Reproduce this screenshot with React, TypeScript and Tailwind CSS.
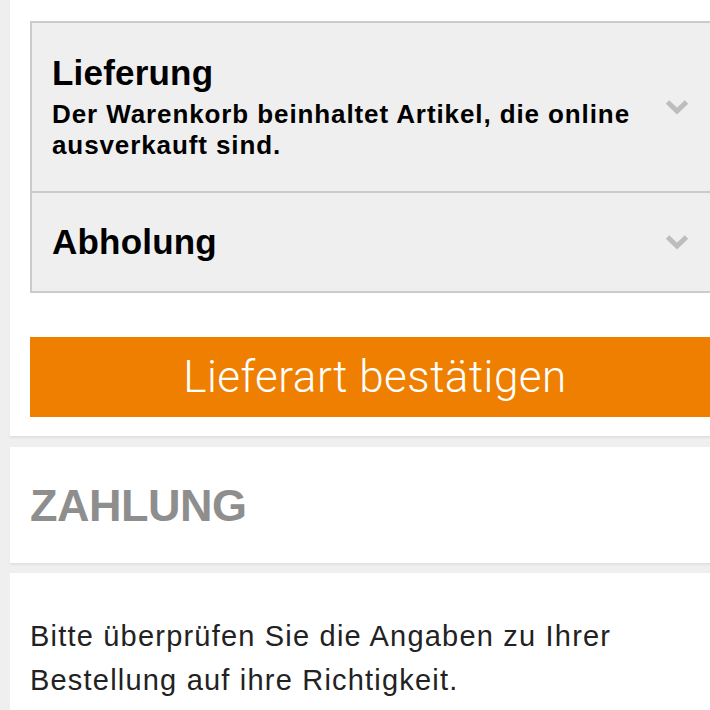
const Chevron = () => (
  <svg width="24" height="16" viewBox="0 0 24 16" className="shrink-0">
    <path
      d="M2.5 3 L12 12 L21.5 3"
      fill="none"
      stroke="#bdbdbd"
      strokeWidth="5"
      strokeLinejoin="miter"
    />
  </svg>
);

const App = () => {
  return (
    <div
      className="w-[710px] h-[710px] overflow-hidden bg-[#efefef]"
      style={{ fontFamily: '"Liberation Sans", Arial, sans-serif' }}
    >
      <div className="ml-[10px] w-[740px] bg-white px-5 pt-[21px] pb-[19px] shadow-[0_2px_2px_rgba(0,0,0,0.06)]">
        <div className="border-2 border-[#cbcbcb] bg-[#efefef]">
          <div className="flex items-center justify-between pl-5 pr-[39px] py-[30px] border-b-2 border-[#cbcbcb]">
            <div className="text-black font-bold">
              <div className="text-[35px] leading-[40px] tracking-[0.2px]">Lieferung</div>
              <div className="mt-[6px] text-[26px] leading-[31px] tracking-[0.9px] max-w-[600px]">
                Der Warenkorb beinhaltet Artikel, die online ausverkauft sind.
              </div>
            </div>
            <Chevron />
          </div>
          <div className="flex items-center justify-between pl-5 pr-[39px] py-[29px]">
            <div className="text-black font-bold text-[35px] leading-[40px] tracking-[0.2px]">
              Abholung
            </div>
            <Chevron />
          </div>
        </div>

        <button
          className="mt-[44px] w-full h-[80px] bg-[#ef7f00] pr-[10px] text-white text-[44px] font-light tracking-[0.5px]"
          style={{ fontFamily: 'Roboto, "DejaVu Sans", sans-serif' }}
        >
          Lieferart bestätigen
        </button>
      </div>

      <div className="mt-[11px] ml-[10px] w-[740px] h-[116px] bg-white px-5 flex items-center shadow-[0_2px_2px_rgba(0,0,0,0.06)]">
        <h2 className="text-[45px] font-bold text-[#8e8e8e] leading-none tracking-[-0.5px]">
          ZAHLUNG
        </h2>
      </div>

      <div className="mt-[10px] ml-[10px] w-[740px] bg-white px-5 pt-[41px] pb-10">
        <p className="text-[29px] leading-[44px] text-[#222] tracking-[1.2px] max-w-[640px]">
          Bitte überprüfen Sie die Angaben zu Ihrer Bestellung auf ihre
          Richtigkeit.
        </p>
      </div>
    </div>
  );
};

export default App;
